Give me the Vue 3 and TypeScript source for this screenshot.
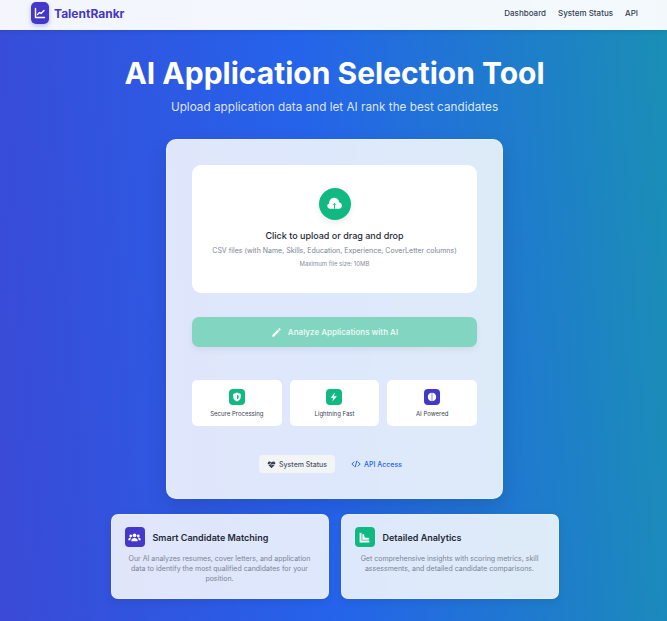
<template>
  <div class="page">
    <nav class="navbar">
      <div class="brand">
        <span class="brand-icon">
          <svg viewBox="0 0 24 24" width="12" height="12" fill="none" stroke="#fff" stroke-width="2.800" stroke-linecap="round" stroke-linejoin="round">
            <path d="M3 3v18h18" />
            <path d="M7 15l4-4 3 2 6-6" />
          </svg>
        </span>
        <span class="brand-name">TalentRankr</span>
      </div>
      <div class="nav-links">
        <a v-for="link in navLinks" :key="link">{{ link }}</a>
      </div>
    </nav>

    <main class="content">
      <h1>AI Application Selection Tool</h1>
      <p class="subtitle">Upload application data and let AI rank the best candidates</p>

      <section class="panel">
        <div class="upload-box">
          <div class="upload-icon">
            <svg viewBox="0 0 24 24" width="17" height="17">
              <path fill="#fff" d="M5.500 18a4 4 0 0 1-1-7.800 6.500 6.500 0 0 1 14-1.400 4.700 4.700 0 0 1 .5 9.200z" />
              <path fill="none" stroke="#10b981" stroke-width="1.300" d="M12 18v-7.500M9.800 12.500L12 10.300l2.200 2.200" />
            </svg>
          </div>
          <p class="upload-title">Click to upload or drag and drop</p>
          <p class="upload-desc">CSV files (with Name, Skills, Education, Experience, CoverLetter columns)</p>
          <p class="upload-limit">Maximum file size: 10MB</p>
        </div>

        <button class="analyze-btn" type="button">
          <svg viewBox="0 0 24 24" width="11" height="11" fill="#fff">
            <path d="M3 17.500V21h3.500L18 9.500 14.500 6zM20.700 6.800a1.500 1.500 0 0 0 0-2.100l-1.400-1.400a1.500 1.500 0 0 0-2.100 0L15.600 4.900l3.500 3.500z" />
          </svg>
          Analyze Applications with AI
        </button>

        <div class="features">
          <div v-for="f in features" :key="f.label" class="feature">
            <span class="feature-icon" :class="f.tone">
              <svg viewBox="0 0 24 24" width="10" height="10" fill="#fff">
                <path :d="f.path" />
              </svg>
            </span>
            <span class="feature-label">{{ f.label }}</span>
          </div>
        </div>

        <div class="actions">
          <a class="action status">
            <svg viewBox="0 0 24 24" width="9" height="9" fill="#374151">
              <path d="M12 22L3 12.500C.5 9.500 2 4 6.800 4c2.200 0 3.800 1 5.200 2.800C13.400 5 15 4 17.200 4 22 4 23.500 9.500 21 12.500z" />
              <path d="M1 12h6l2-3 3 5 2-2h9" fill="none" stroke="#f3f4f6" stroke-width="1.800" />
            </svg>
            System Status
          </a>
          <a class="action api">
            <svg viewBox="0 0 24 24" width="10" height="10" fill="none" stroke="#2563eb" stroke-width="2.400" stroke-linecap="round" stroke-linejoin="round">
              <path d="M7 7l-5 5 5 5M17 7l5 5-5 5M14 5l-4 14" />
            </svg>
            API Access
          </a>
        </div>
      </section>

      <section class="info-row">
        <article class="info-card">
          <header>
            <span class="info-icon indigo">
              <svg viewBox="0 0 24 24" width="13" height="13" fill="#fff">
                <circle cx="12" cy="8" r="3.400" />
                <circle cx="5" cy="9" r="2.500" />
                <circle cx="19" cy="9" r="2.500" />
                <path d="M6 19c0-4 2.500-6 6-6s6 2 6 6zM.5 17c0-3 1.500-5 4.500-5l1 .3C4.800 13.500 4.200 15 4.200 17zM23.500 17c0-3-1.500-5-4.500-5l-1 .3c1.200 1.200 1.800 2.700 1.800 4.700z" />
              </svg>
            </span>
            <h3>Smart Candidate Matching</h3>
          </header>
          <p>Our AI analyzes resumes, cover letters, and application data to identify the most qualified candidates for your position.</p>
        </article>
        <article class="info-card">
          <header>
            <span class="info-icon green">
              <svg viewBox="0 0 24 24" width="13" height="13" fill="#fff">
                <path d="M3 3h3.500v14.500H21V21H3z" />
                <path d="M8 6h3.500v4l2.500 2.500H20V16H8z" />
              </svg>
            </span>
            <h3>Detailed Analytics</h3>
          </header>
          <p>Get comprehensive insights with scoring metrics, skill assessments, and detailed candidate comparisons.</p>
        </article>
      </section>
    </main>
  </div>
</template>

<script setup lang="ts">
interface Feature {
  label: string
  tone: string
  path: string
}

const navLinks: string[] = ['Dashboard', 'System Status', 'API']

const features: Feature[] = [
  {
    label: 'Secure Processing',
    tone: 'green',
    path: 'M12 1L3 4.500v7C3 17 7 21.500 12 23c5-1.500 9-6 9-11.500v-7zM12 7l4 1.500V12c0 2.500-1.700 4.500-4 5.500z',
  },
  {
    label: 'Lightning Fast',
    tone: 'green',
    path: 'M14 1L4 14h6l-2 9 11-13h-7z',
  },
  {
    label: 'AI Powered',
    tone: 'indigo',
    path: 'M11.300 2C6 2 2 6.500 2 12s4 10 9.300 10zM12.700 2v20C18 22 22 17.500 22 12S18 2 12.700 2z',
  },
]
</script>

<style scoped>
.page {
  height: 621px;
  overflow: hidden;
  font-family: Inter, "Liberation Sans", sans-serif;
  background: linear-gradient(86deg, #3a4ad6 0%, #2563eb 47%, #1a8fb5 100%);
}

.navbar {
  height: 30px;
  box-sizing: border-box;
  padding: 0 29px 0 31px;
  display: flex;
  align-items: center;
  justify-content: space-between;
  background: rgba(255, 255, 255, 0.95);
  box-shadow: 0 1px 4px rgba(0, 0, 0, 0.12);
}

.brand {
  display: flex;
  align-items: center;
  gap: 5px;
  margin-top: -4px;
}

.brand-icon {
  width: 18px;
  height: 22px;
  border-radius: 5px;
  background: #4338ca;
  display: flex;
  align-items: center;
  justify-content: center;
  box-shadow: 0 2px 4px rgba(67, 56, 202, 0.3);
}

.brand-name {
  font-size: 12px;
  font-weight: 700;
  color: #4338ca;
}

.nav-links {
  display: flex;
  gap: 12px;
  margin-top: -4px;
}

.nav-links a {
  font-size: 8px;
  font-weight: 500;
  color: #374151;
}

.content {
  padding-left: 2px;
  display: flex;
  flex-direction: column;
  align-items: center;
}

h1 {
  margin: 23px 0 0;
  font-size: 30px;
  line-height: 40px;
  font-weight: 700;
  color: #fff;
}

.subtitle {
  margin: 4px 0 0;
  font-size: 11.750px;
  line-height: 20px;
  color: rgba(255, 255, 255, 0.85);
}

.panel {
  margin-top: 22px;
  width: 337px;
  height: 360px;
  box-sizing: border-box;
  padding: 25px 25px 0;
  border-radius: 10px;
  background: rgba(255, 255, 255, 0.85);
  border: 1px solid rgba(255, 255, 255, 0.3);
  box-shadow: 0 8px 20px rgba(0, 0, 0, 0.12);
}

.upload-box {
  height: 128px;
  box-sizing: border-box;
  padding-top: 23px;
  border-radius: 9px;
  background: #fff;
  display: flex;
  flex-direction: column;
  align-items: center;
}

.upload-icon {
  width: 32px;
  height: 32px;
  border-radius: 50%;
  background: #10b981;
  display: flex;
  align-items: center;
  justify-content: center;
  box-shadow: 0 3px 6px rgba(0, 0, 0, 0.08);
}

.upload-title {
  margin: 9px 0 0;
  font-size: 9px;
  line-height: 13px;
  font-weight: 500;
  color: #1f2937;
}

.upload-desc {
  margin: 4px 0 0;
  font-size: 7px;
  line-height: 10px;
  color: #7b8494;
}

.upload-limit {
  margin: 3px 0 0;
  font-size: 6px;
  line-height: 9px;
  color: #868e9b;
}

.analyze-btn {
  margin-top: 24px;
  width: 100%;
  height: 30px;
  border: none;
  border-radius: 7px;
  background: #82d5c0;
  color: rgba(255, 255, 255, 0.85);
  font-family: inherit;
  font-size: 8px;
  font-weight: 600;
  display: flex;
  align-items: center;
  justify-content: center;
  gap: 6px;
  box-shadow: 0 3px 6px rgba(0, 0, 0, 0.06);
}

.features {
  margin-top: 33px;
  display: grid;
  grid-template-columns: repeat(3, 1fr);
  gap: 8px;
}

.feature {
  height: 46px;
  box-sizing: border-box;
  padding-top: 9px;
  border-radius: 5px;
  background: #fff;
  display: flex;
  flex-direction: column;
  align-items: center;
  gap: 4px;
}

.feature-icon {
  width: 16px;
  height: 16px;
  border-radius: 4px;
  display: flex;
  align-items: center;
  justify-content: center;
}

.green {
  background: #10b981;
}

.indigo {
  background: #4338ca;
}

.feature-label {
  font-size: 6px;
  line-height: 9px;
  font-weight: 400;
  color: #374151;
}

.actions {
  margin-top: 29px;
  display: flex;
  justify-content: center;
  gap: 8px;
}

.action {
  height: 18px;
  box-sizing: border-box;
  padding: 0 8px;
  border-radius: 4px;
  display: flex;
  align-items: center;
  gap: 3px;
  font-size: 7px;
  font-weight: 500;
}

.status {
  background: #f3f4f6;
  color: #4b5563;
}

.api {
  color: #2563eb;
}

.info-row {
  margin-top: 15px;
  display: flex;
  gap: 12px;
}

.info-card {
  width: 218px;
  height: 85px;
  box-sizing: border-box;
  padding: 12px 13px 0;
  border-radius: 7px;
  background: rgba(255, 255, 255, 0.85);
  border: 1px solid rgba(255, 255, 255, 0.3);
  box-shadow: 0 3px 8px rgba(0, 0, 0, 0.08);
}

.info-card header {
  display: flex;
  align-items: center;
  gap: 8px;
}

.info-icon {
  width: 20px;
  height: 20px;
  border-radius: 4px;
  display: flex;
  align-items: center;
  justify-content: center;
}

.info-card h3 {
  margin: 0;
  font-size: 9px;
  font-weight: 600;
  color: #1f2937;
}

.info-card p {
  margin: 7px 0 0;
  font-size: 7px;
  line-height: 10px;
  text-align: center;
  color: #7b8494;
}
</style>
